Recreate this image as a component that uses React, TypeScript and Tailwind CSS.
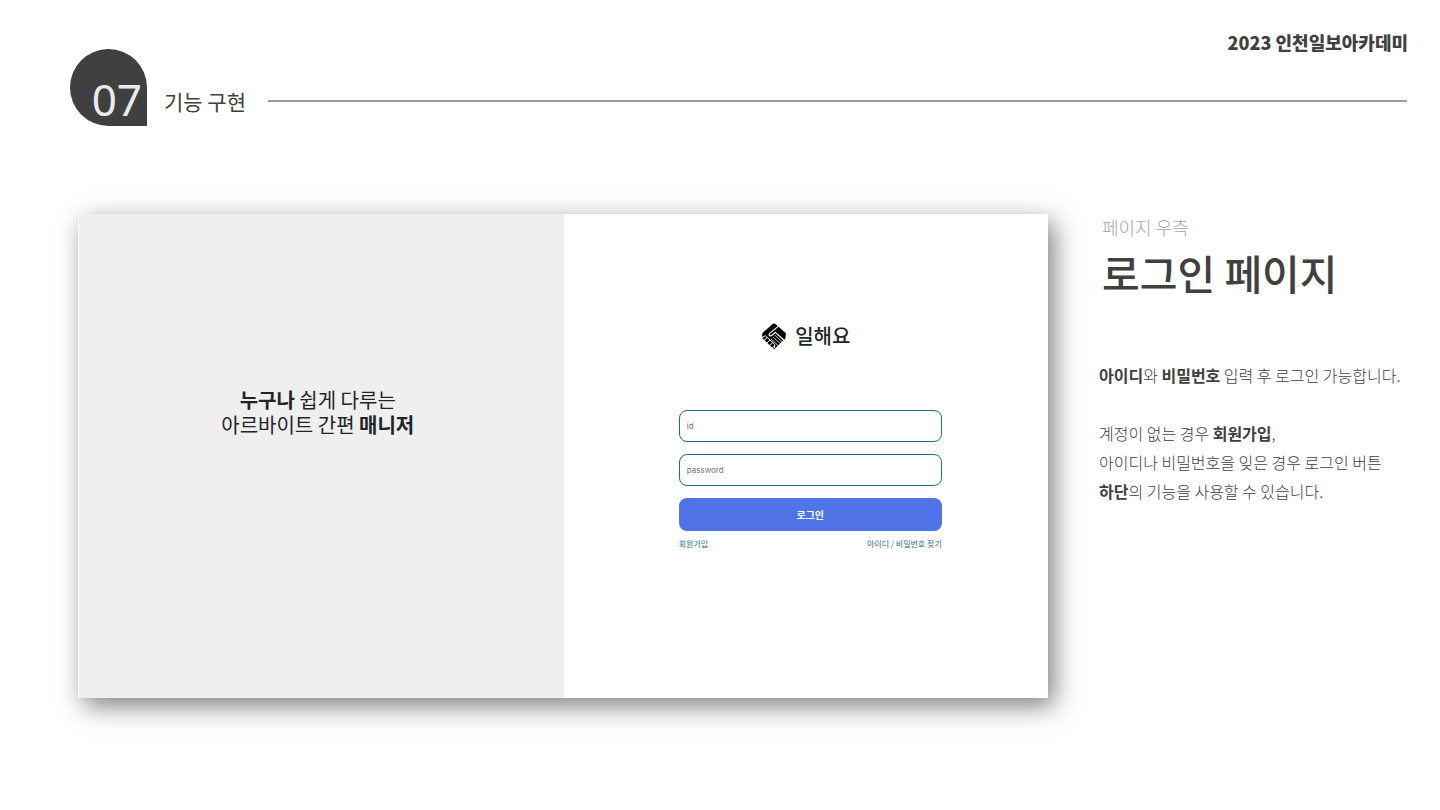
import type { ReactNode } from "react";

const fields = [
  { id: "user-id", label: "id", type: "text" },
  { id: "user-password", label: "password", type: "password" },
];

function HandshakeIcon() {
  return (
    <svg width="24" height="26" viewBox="0 0 24 26" fill="none" aria-hidden="true">
      <path
        d="M10.6 1.1 1.2 9.2Q0 10.4.1 12L.6 15.6 11 25.2Q12.1 26.2 13.2 25.2L23.2 15.8 23.9 12Q24 10.2 22.9 9.2L13.5 1.1Q12 0 10.6 1.1Z"
        fill="#000"
      />
      <g stroke="#fff" strokeLinecap="round" strokeLinejoin="round">
        <path d="M16.2 3.4 7.4 10.6Q6.6 12 7.6 12.7 8.7 13.3 10 12.3L13.3 9.4 21.8 17" strokeWidth="1.2" />
        <path d="M.4 14.4 3.2 12.7 12.7 21.2 12.4 24.6" strokeWidth="1" />
        <path d="m2 17.4 3.1-2.7M4.8 20l3.2-2.8M7.6 22.6l3.1-3M10.2 25.2l2.3-2.3" strokeWidth="1" />
        <path d="m11.3 14.3 7.2 6.4M9.1 16.1l6.8 6.2M12.9 12.3l7.7 6.9" strokeWidth=".8" />
      </g>
    </svg>
  );
}

function SlideHeader() {
  return (
    <header className="pt-[30px]">
      <p className="pr-8 text-right text-[18px] leading-6 font-black">2023 인천일보아카데미</p>
      <div className="-mt-[5px] flex items-end pr-[33px] pl-[70px]">
        <div className="flex h-[77px] w-[77px] items-end justify-end rounded-full rounded-br-none bg-[#404040] pr-[5px] pb-[5px]">
          <span className="font-['Noto_Sans','Noto_Sans_CJK_KR',sans-serif] text-[44px] leading-[44px] text-[#ebebeb]">
            07
          </span>
        </div>
        <div className="flex h-[50px] grow items-center gap-[22px] pl-[17px]">
          <h2 className="text-[21px] leading-8">기능 구현</h2>
          <div className="h-[2px] grow bg-[#9b9b9b]" />
        </div>
      </div>
    </header>
  );
}

function LoginForm() {
  return (
    <form className="w-[263px] pt-[107px] text-[8px] text-[#1f6d92]" onSubmit={(e) => e.preventDefault()}>
      <h3 className="flex items-center justify-center gap-[9px] pr-2 text-[20px] leading-[30px] font-medium text-[#212529]">
        <HandshakeIcon />
        일해요
      </h3>
      <div className="mt-[59px] flex flex-col gap-3">
        {fields.map(({ id, label, type }) => (
          <input
            key={id}
            id={id}
            type={type}
            aria-label={label}
            placeholder={label}
            className="h-8 w-full rounded-lg border border-[#1f6d92] bg-white px-[7px] font-['Inter','Noto_Sans_CJK_KR',sans-serif] leading-3 placeholder:text-[#6c757d]"
          />
        ))}
        <button type="submit" className="h-[33px] rounded-lg bg-[#5073e8] text-[10px] font-bold text-white">
          로그인
        </button>
      </div>
      <div className="mt-[7px] flex justify-between leading-3">
        <a href="#signup">회원가입</a>
        <a href="#find">아이디 / 비밀번호 찾기</a>
      </div>
    </form>
  );
}

function LoginPreview() {
  return (
    <section className="flex h-[484px] min-w-0 grow bg-white pl-px shadow-[6px_8px_24px_rgba(0,0,0,0.5)]">
      <div className="flex w-1/2 justify-center bg-[#efefef] pt-[173px] pr-[7px]">
        <p className="text-center text-[20px] leading-[25px] text-[#212529]">
          <b>누구나</b> 쉽게 다루는
          <br />
          아르바이트 간편 <b>매니저</b>
        </p>
      </div>
      <div className="flex w-1/2 justify-center pl-[9px]">
        <LoginForm />
      </div>
    </section>
  );
}

function Strong({ children }: { children: ReactNode }) {
  return <strong className="font-bold">{children}</strong>;
}

function Description() {
  return (
    <aside className="w-[341px] shrink-0 whitespace-nowrap">
      <p className="pl-[3px] text-[18px] leading-[26px] font-light text-[#a6a6a6]">페이지 우측</p>
      <h1 className="pl-[3px] text-[41px] leading-[64px] font-medium">로그인 페이지</h1>
      <div className="mt-[57px] text-[16px] leading-[29px] font-light">
        <p>
          <Strong>아이디</Strong>와 <Strong>비밀번호</Strong> 입력 후 로그인 가능합니다.
        </p>
        <p className="mt-[29px]">
          계정이 없는 경우 <Strong>회원가입</Strong>,
          <br />
          아이디나 비밀번호을 잊은 경우 로그인 버튼
          <br />
          <Strong>하단</Strong>의 기능을 사용할 수 있습니다.
        </p>
      </div>
    </aside>
  );
}

export default function App() {
  return (
    <div className="min-h-screen bg-white font-['Noto_Sans_CJK_KR',sans-serif] text-[#404040]">
      <SlideHeader />
      <main className="flex gap-[51px] pt-[88px] pb-12 pl-[78px]">
        <LoginPreview />
        <Description />
      </main>
    </div>
  );
}
